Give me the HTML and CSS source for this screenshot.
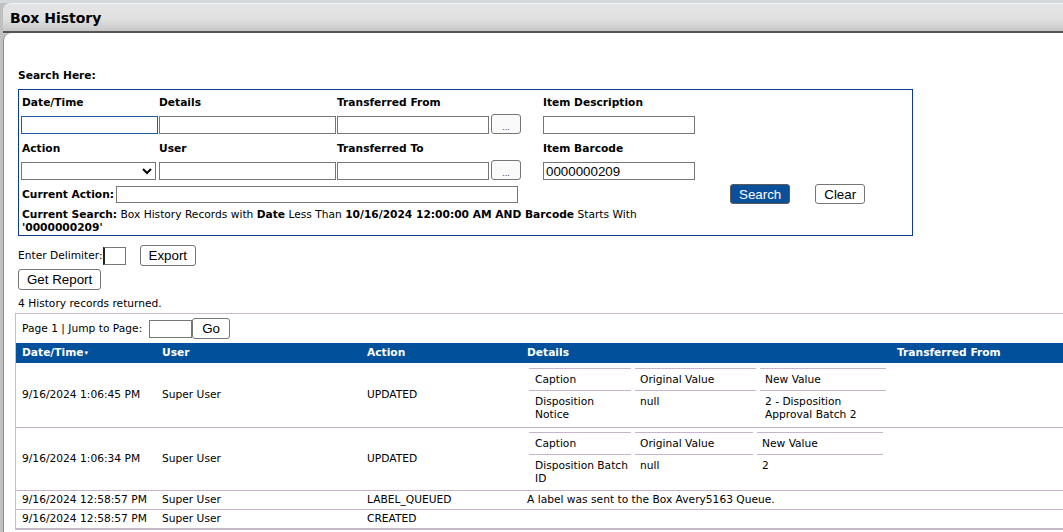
FILE: index.html
```html
<!DOCTYPE html>
<html>
<head>
<meta charset="utf-8">
<title>Box History</title>
<link rel="stylesheet" href="styles.css">
</head>
<body>
<div class="frame">
  <div class="titlebar">Box History</div>
  <div class="panel">
    <div class="search-title">Search Here:</div>
    <div class="search-box">
      <div class="sgrid">
        <div class="lbl first">Date/Time</div>
        <div class="lbl">Details</div>
        <div class="lbl">Transferred From</div>
        <div class="lbl">Item Description</div>

        <div class="cell"><input class="txt focus w137" type="text"></div>
        <div class="cell"><input class="txt w177" type="text"></div>
        <div class="cell"><input class="txt w152" type="text"><button class="dots">...</button></div>
        <div class="cell"><input class="txt w152" type="text"></div>

        <div class="lbl lbl2 first">Action</div>
        <div class="lbl lbl2">User</div>
        <div class="lbl lbl2">Transferred To</div>
        <div class="lbl lbl2">Item Barcode</div>

        <div class="cell"><select class="sel"><option></option></select></div>
        <div class="cell"><input class="txt w177" type="text"></div>
        <div class="cell"><input class="txt w152" type="text"><button class="dots">...</button></div>
        <div class="cell"><input class="txt w152" type="text" value="0000000209"></div>
      </div>
      <div class="action-row">
        <span class="b">Current Action:</span>
        <input class="txt w402" type="text">
        <button class="btn primary search-btn">Search</button>
        <button class="btn clear-btn">Clear</button>
      </div>
      <div class="current-search"><span class="b">Current Search:</span> Box History Records with <span class="b">Date</span> Less Than <span class="b">10/16/2024 12:00:00 AM AND Barcode</span> Starts With <span class="b">'0000000209'</span></div>
    </div>

    <div class="delim-row">
      <span>Enter Delimiter:</span><input class="txt delim" type="text"><button class="btn export-btn">Export</button>
    </div>
    <div class="report-row"><button class="btn">Get Report</button></div>
    <div class="count">4 History records returned.</div>

    <div class="grid-wrap">
      <div class="pager">
        <span>Page 1 | Jump to Page:</span><input class="txt page-in" type="text"><button class="btn go">Go</button>
      </div>
      <table class="hist">
        <colgroup>
          <col class="c1"><col class="c2"><col class="c3"><col class="c4"><col class="c5">
        </colgroup>
        <thead>
          <tr><th>Date/Time<span class="sort">▾</span></th><th>User</th><th>Action</th><th>Details</th><th>Transferred From</th></tr>
        </thead>
        <tbody>
          <tr class="tall">
            <td>9/16/2024 1:06:45 PM</td><td>Super User</td><td>UPDATED</td>
            <td class="det">
              <table class="sub">
                <tr><th class="s1">Caption</th><th class="s2">Original Value</th><th class="s3">New Value</th></tr>
                <tr><td class="s1">Disposition Notice</td><td>null</td><td class="s3">2 - Disposition Approval Batch 2</td></tr>
              </table>
            </td>
            <td></td>
          </tr>
          <tr class="tall t2">
            <td>9/16/2024 1:06:34 PM</td><td>Super User</td><td>UPDATED</td>
            <td class="det">
              <table class="sub">
                <tr><th class="s1">Caption</th><th class="s2b">Original Value</th><th class="s3">New Value</th></tr>
                <tr><td class="s1 wide">Disposition Batch ID</td><td>null</td><td class="s3">2</td></tr>
              </table>
            </td>
            <td></td>
          </tr>
          <tr class="short">
            <td>9/16/2024 12:58:57 PM</td><td>Super User</td><td>LABEL_QUEUED</td><td>A label was sent to the Box Avery5163 Queue.</td><td></td>
          </tr>
          <tr class="short">
            <td>9/16/2024 12:58:57 PM</td><td>Super User</td><td>CREATED</td><td></td><td></td>
          </tr>
        </tbody>
      </table>
    </div>
  </div>
</div>
</body>
</html>
```
FILE: styles.css
```css
* { box-sizing: border-box; }
html, body { margin: 0; padding: 0; }
body {
  background: #c6c8cc;
  font-family: "DejaVu Sans", Verdana, sans-serif;
  font-size: 10.67px;
  color: #000;
  overflow: hidden;
  height: 532px;
}
.frame {
  padding: 3px 0 0 3px;
  background: linear-gradient(#d3d7de 0, #d3d7de 3px, #c0c0c0 3px);
  height: 532px;
}
.titlebar {
  height: 30px;
  border-radius: 8px 0 0 0;
  border-top: 1px solid #f4f4f4;
  background: linear-gradient(#e4e4e4 0%, #e1e1e1 55%, #c6c6c6 100%);
  border-bottom: 2px solid #555;
  font-size: 14px;
  font-weight: bold;
  line-height: 28px;
  padding-left: 7px;
}
.panel {
  background: #fff;
  border-left: 1px solid #8c8c8c;
  border-top-left-radius: 8px;
  height: 500px;
  padding: 0 0 0 14px;
  overflow: hidden;
}
.b { font-weight: bold; }
.search-title {
  font-weight: bold;
  line-height: 13px;
  padding-top: 36px;
}
.search-box {
  margin-top: 7px;
  width: 895px;
  border: 1px solid #0d3c8f;
  padding: 0 0 1px 2px;
}
.sgrid {
  display: grid;
  grid-template-columns: 138px 178px 206px 1fr;
  grid-template-rows: 26px 18px 28px 18px;
}
.lbl {
  font-weight: bold;
  line-height: 13px;
  padding-top: 6px;
}
.lbl.first { padding-left: 1px; }
.lbl.lbl2 { padding-top: 8px; }
.cell { display: flex; align-items: flex-start; }
.txt {
  height: 18px;
  border: 1px solid #767676;
  border-radius: 0;
  padding: 0 2px;
  font-family: "Liberation Sans", Arial, sans-serif;
  font-size: 13.33px;
  background: #fff;
  margin: 0;
  outline: none;
}
.txt.focus { border-color: #1e5aa8; }
.w137 { width: 137px; }
.w177 { width: 177px; }
.w152 { width: 152px; }
.w402 { width: 402px; height: 17px; }
.sel {
  width: 135px;
  height: 18px;
  border: 1px solid #767676;
  border-radius: 0;
  background: #fff;
  margin: 0;
  font-family: "Liberation Sans", Arial, sans-serif;
  font-size: 13.33px;
}
.dots {
  width: 30px;
  height: 20px;
  margin: -2px 0 0 2px;
  border: 1px solid #767676;
  border-radius: 3px;
  background: #fafafa;
  font-family: "Liberation Sans", Arial, sans-serif;
  font-size: 9px;
  color: #333;
  padding: 6px 0 0;
  line-height: 10px;
}
.action-row {
  display: flex;
  align-items: center;
  height: 20px;
  margin-top: 4px;
  padding-left: 1px;
  line-height: 13px;
}
.action-row .b { margin-right: 2px; }
.btn {
  font-family: "Liberation Sans", Arial, sans-serif;
  font-size: 13.33px;
  height: 21px;
  padding: 0 8px;
  border: 1px solid #767676;
  border-radius: 3px;
  background: #fff;
  color: #000;
  margin: 0;
  line-height: 19px;
}
.search-btn {
  margin-left: 212px;
  height: 20px;
  background: #0b4f9b;
  color: #fff;
  border-color: #5a5a5a;
}
.clear-btn { margin-left: 25px; height: 20px; }
.current-search {
  margin-top: 4px;
  width: 660px;
  line-height: 13px;
  padding-left: 1px;
}
.delim-row {
  display: flex;
  align-items: center;
  margin-top: 9px;
  height: 21px;
}
.delim { width: 23px; margin-left: 0; border-left: 2px solid #222; }
.export-btn { margin-left: 14px; }
.report-row { margin-top: 3px; height: 22px; }
.count {
  margin-top: 6px;
  line-height: 13px;
}
.grid-wrap {
  margin: 3px 0 0 -3px;
  width: 1100px;
  border: 1px solid #c7bccb;
  border-right: none;
}
.pager {
  height: 29px;
  display: flex;
  align-items: center;
  padding-left: 6px;
}
.page-in { width: 43px; height: 18px; margin-left: 7px; }
.go { height: 21px; padding: 0 9px; margin-left: 0; }
.hist {
  border-collapse: collapse;
  width: 100%;
  table-layout: fixed;
}
.c1 { width: 140px; }
.c2 { width: 205px; }
.c3 { width: 160px; }
.c4 { width: 370px; }
.hist > thead th {
  background: #00509b;
  color: #fff;
  font-weight: bold;
  text-align: left;
  height: 20px;
  padding: 0 6px;
  line-height: 20px;
  white-space: nowrap;
}
.sort { font-size: 7px; vertical-align: 1px; margin-left: 1px; }
.hist > tbody > tr > td {
  border-bottom: 1px solid #c9b3cc;
  padding: 0 6px;
  vertical-align: middle;
  line-height: 13px;
  white-space: nowrap;
}
.hist > tbody > tr.tall > td { height: 64px; }
.hist > tbody > tr.tall.t2 > td { height: 63px; }
.hist > tbody > tr.short > td { height: 19px; }
.hist > tbody > tr > td.det { padding: 0 0 0 4px; }
.sub {
  border-collapse: separate;
  border-spacing: 4px 0;
}
.sub th {
  font-weight: normal;
  text-align: left;
  border-top: 1px solid #c9b3cc;
  border-bottom: 1px solid #c9b3cc;
  padding: 4px 5px 4px 5px;
  line-height: 13px;
  white-space: nowrap;
}
.s1 { width: 102px; }
.s2 { width: 121px; }
.s2b { width: 118px; }
.s3 { width: 126px; }
.sub td {
  padding: 4px 5px 0 5px;
  line-height: 13px;
  white-space: normal;
  vertical-align: top;
}
.sub td.s1 { padding-right: 18px; padding-left: 6px; }
.sub td.s1.wide { padding-right: 2px; }
.sub td.s3 { padding-right: 14px; }
.sub th.s1 { padding-left: 6px; }
```
